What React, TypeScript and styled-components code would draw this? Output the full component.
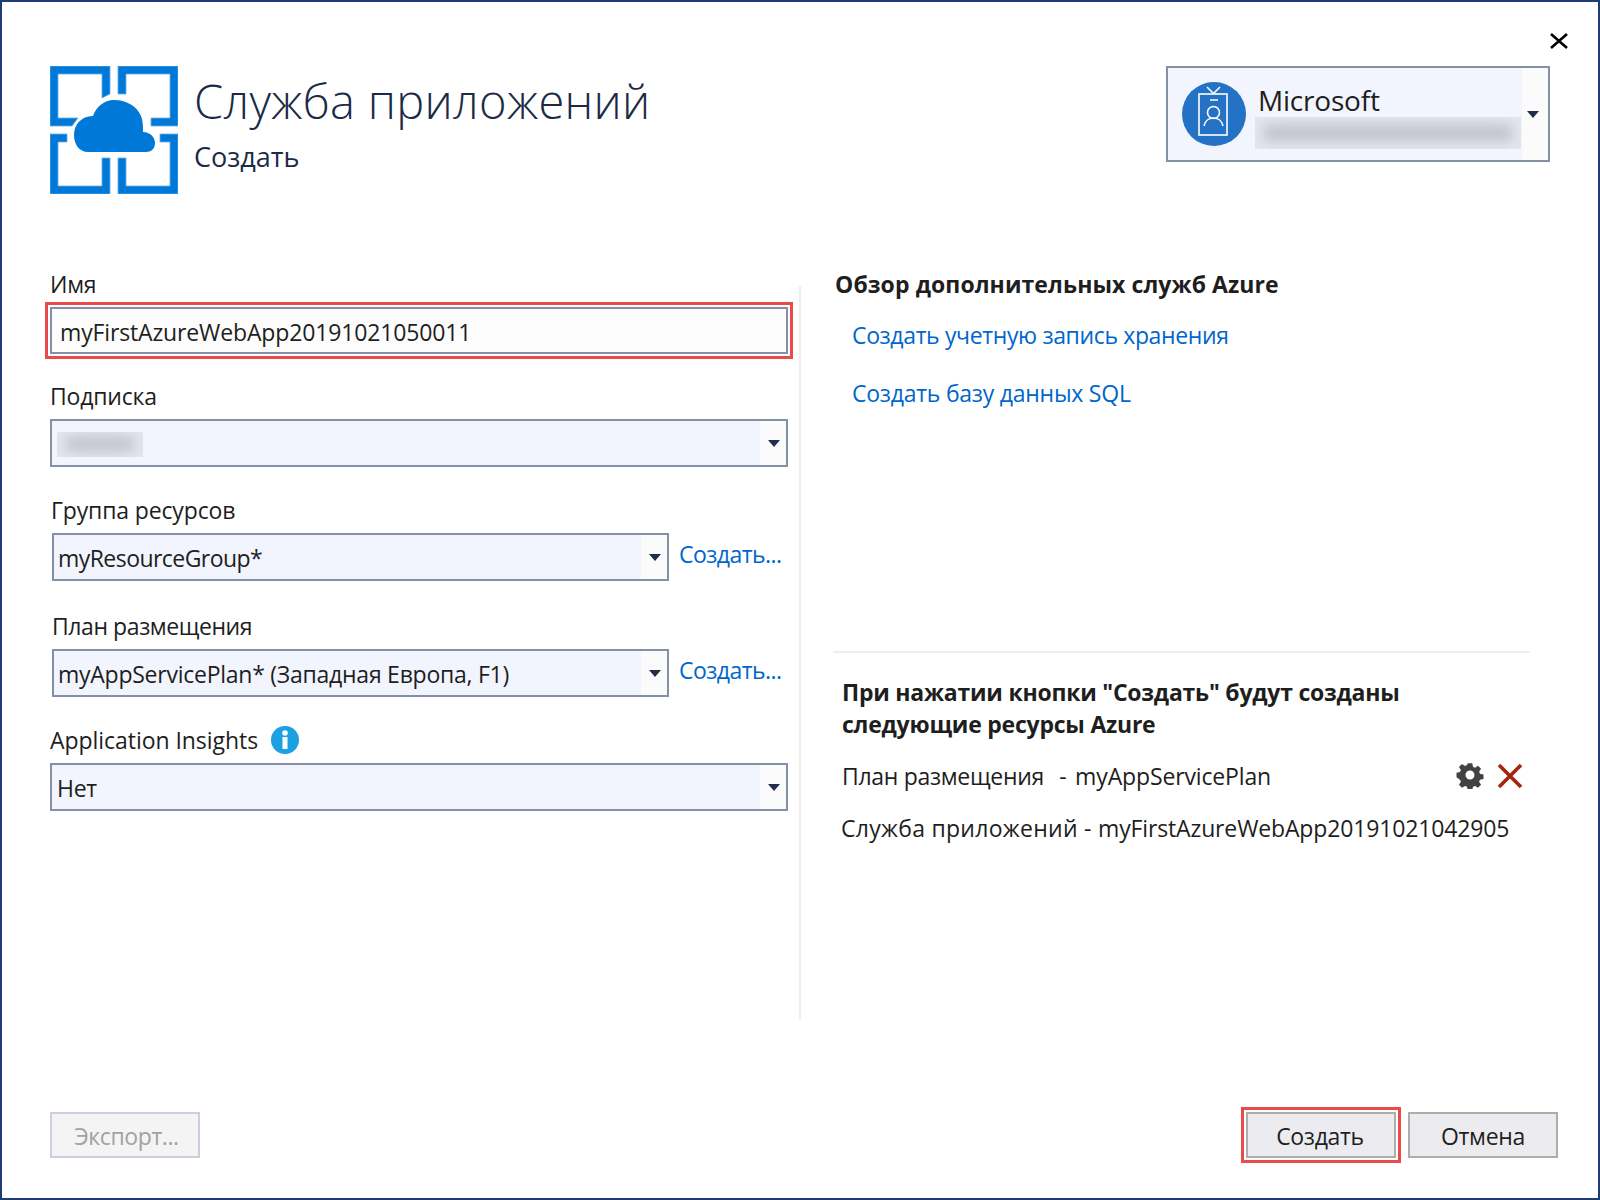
import React from "react";
import styled, { createGlobalStyle } from "styled-components";

const GlobalStyle = createGlobalStyle`
  html, body { margin: 0; padding: 0; background: #fff; }
  body { font-family: "Open Sans", "Noto Sans", "Liberation Sans", sans-serif; }
`;

const Window = styled.div`
  box-sizing: border-box;
  width: 1600px;
  height: 1200px;
  border: 2px solid #1f3b77;
  background: #fff;
  display: flex;
  flex-direction: column;
  color: #1e1e1e;
  font-size: 23px;
  letter-spacing: -0.3px;
`;

const CloseRow = styled.div`
  height: 64px;
  display: flex;
  justify-content: flex-end;
  align-items: flex-start;
  padding: 31px 29px 0 0;
  box-sizing: border-box;
`;

const Header = styled.header`
  display: flex;
  justify-content: space-between;
  align-items: flex-start;
  padding: 0 48px;
  height: 128px;
`;

const Brand = styled.div`
  display: flex;
  gap: 16px;
`;

const Titles = styled.div`
  display: flex;
  flex-direction: column;
  padding-top: 3px;
`;

const Title = styled.h1`
  margin: 0;
  font-size: 47px;
  font-weight: 300;
  line-height: 64px;
  color: #1b2a47;
  letter-spacing: 0.3px;
`;

const Subtitle = styled.div`
  font-size: 27px;
  line-height: 36px;
  margin-top: 6px;
  color: #1b2a47;
  letter-spacing: 0;
`;

const Account = styled.div`
  box-sizing: border-box;
  width: 384px;
  height: 96px;
  border: 2px solid #8590a8;
  background: #fbfbfc;
  display: flex;
  align-items: center;
`;

const AccountBody = styled.div`
  width: 354px;
  height: 92px;
  background: #f2f5fd;
  display: flex;
  align-items: center;
  padding-left: 14px;
  box-sizing: border-box;
`;

const AccountText = styled.div`
  display: flex;
  flex-direction: column;
  margin-left: 9px;
`;

const AccountName = styled.div`
  font-size: 28px;
  line-height: 38px;
  margin: 2px 0 -2px 3px;
  letter-spacing: -0.2px;
`;

const Redacted = styled.div<{ $w: number; $h: number }>`
  width: ${(p) => p.$w}px;
  height: ${(p) => p.$h}px;
  background: #e4e6ee;
  overflow: hidden;
  display: flex;
  align-items: center;
  justify-content: center;
`;

const Smudge = styled.div<{ $w: number; $h: number }>`
  width: ${(p) => p.$w}px;
  height: ${(p) => p.$h}px;
  background: #c4c6ce;
  border-radius: 6px;
  filter: blur(6px);
`;

const Main = styled.main`
  display: grid;
  grid-template-columns: 797px 2px 1fr;
  margin-top: 75px;
`;

const Rule = styled.div`
  margin-top: 17px;
  height: 734px;
  background: #eeeeee;
`;

const LeftColumn = styled.section`
  padding-left: 48px;
`;

const Label = styled.div<{ $top?: number; $left?: number; $track?: number }>`
  line-height: 30px;
  height: 30px;
  margin-top: ${(p) => p.$top ?? 0}px;
  margin-left: ${(p) => p.$left ?? 0}px;
  margin-bottom: 8px;
  letter-spacing: ${(p) => p.$track ?? -0.3}px;
  display: flex;
  align-items: center;
  gap: 13px;
`;

const TextBox = styled.div`
  box-sizing: border-box;
  width: 738px;
  height: 47px;
  border: 2px solid #8590a8;
  background: #fcfcfc;
  padding-left: 8px;
  line-height: 47px;
  letter-spacing: -0.14px;
  outline: 3px solid #e94c48;
  outline-offset: 2px;
`;

const Combo = styled.div<{ $wide?: boolean }>`
  box-sizing: border-box;
  width: ${(p) => (p.$wide ? 738 : 617)}px;
  height: 48px;
  border: 2px solid #8590a8;
  background: #fbfbfc;
  display: flex;
`;

const ComboValue = styled.div<{ $pad?: number; $track?: number }>`
  flex: 1;
  box-sizing: border-box;
  background: #f2f5fd;
  padding: 2px 0 0 ${(p) => p.$pad ?? 5}px;
  letter-spacing: ${(p) => p.$track ?? -0.3}px;
  display: flex;
  align-items: center;
  white-space: nowrap;
`;

const Caret = styled.div<{ $nudge?: number }>`
  width: 26px;
  display: flex;
  align-items: center;
  justify-content: center;
  &::after {
    content: "";
    border-left: 6px solid transparent;
    border-right: 6px solid transparent;
    border-top: 7px solid #1e2d4a;
    transform: translateX(${(p) => p.$nudge ?? 1}px);
  }
`;

const ComboRow = styled.div`
  display: flex;
  gap: 10px;
  margin-left: 2px;
  align-items: center;
`;

const Link = styled.a`
  color: #0066cc;
  text-decoration: none;
  white-space: nowrap;
  line-height: 30px;
  cursor: pointer;
`;

const CreateLink = styled(Link)`
  margin-top: -6px;
  letter-spacing: -0.55px;
`;

const RightColumn = styled.section`
  display: flex;
  flex-direction: column;
`;

const Heading = styled.div`
  font-weight: 700;
  line-height: 30px;
  margin-left: 34px;
  letter-spacing: 0.08px;
`;

const RightLink = styled(Link)<{ $top: number; $track: number }>`
  margin-left: 51px;
  margin-top: ${(p) => p.$top}px;
  letter-spacing: ${(p) => p.$track}px;
`;

const HRule = styled.div`
  height: 2px;
  background: #eeeeee;
  margin: 243px 68px 0 32px;
`;

const Summary = styled.div`
  margin: 23px 0 0 41px;
  font-weight: 700;
  line-height: 32px;
  width: 640px;
  letter-spacing: -0.23px;
`;

const ResourceRow = styled.div`
  display: flex;
  align-items: center;
  justify-content: space-between;
  margin: 21px 75px 0 41px;
  height: 30px;
  white-space: pre;
`;

const ResourceActions = styled.div`
  display: flex;
  align-items: center;
  gap: 13px;
  margin-top: -2px;
`;

const RemoveSlot = styled.span`
  display: flex;
  margin-top: 2px;
`;

const ResourceLine = styled.div`
  margin: 22px 0 0 40px;
  line-height: 30px;
  letter-spacing: 0.28px;
  white-space: pre;
`;

const Latin = styled.span`
  letter-spacing: -0.14px;
`;

const Dash = styled.span`
  margin: 0 3px 0 4px;
`;

const Footer = styled.footer`
  margin-top: auto;
  padding: 0 40px 40px 48px;
  display: flex;
  align-items: center;
`;

const Button = styled.button<{ $primary?: boolean }>`
  box-sizing: border-box;
  width: 150px;
  height: 46px;
  border: 2px solid #adadad;
  background: #ececf0;
  color: #1e1e1e;
  font: inherit;
  letter-spacing: inherit;
  padding: ${(p) => (p.$primary ? "2px 2px 0 0" : "2px 0 0")};
  outline: ${(p) => (p.$primary ? "3px solid #e94c48" : "none")};
  outline-offset: 2px;
`;

const DisabledButton = styled(Button)`
  border-color: #ccd0de;
  background: #f4f4f4;
  color: #a2a2a2;
  padding-left: 3px;
  letter-spacing: -0.4px;
`;

const FooterActions = styled.div`
  margin-left: auto;
  display: flex;
  gap: 12px;
`;

const AzureLogo = () => (
  <svg width="128" height="128" viewBox="0 0 128 128" fill="#0078d7">
    <g stroke="#66aee8" strokeWidth="0.8">
      <polygon points="0,0 60,0 60,28 52,32 52,8 8,8 8,52 28,52 22,60 0,60" />
      <polygon points="68,0 128,0 128,60 101,60 101,52 120,52 120,8 76,8 76,28 68,28" />
      <polygon points="0,68 17,68 17,76 8,76 8,120 52,120 52,92 60,92 60,128 0,128" />
      <polygon points="110,68 128,68 128,128 68,128 68,92 76,92 76,120 120,120 120,76 110,76" />
    </g>
    <path d="M38 86C29 86 24 78 24 69C24 59 31 50 43 50C46 41 54 34 64 34C76 34 87 40 91 50C93 55 93 60 93 66C100 66 105 71 105 77C105 83 101 86 96 86Z" />
  </svg>
);

const BadgeAvatar = () => (
  <svg width="64" height="64" viewBox="0 0 64 64" fill="none" stroke="#fff" strokeWidth="1.6">
    <circle cx="32" cy="32" r="32" fill="#2372c6" stroke="none" />
    <rect x="17" y="12" width="28" height="41" />
    <path d="M25 5l7 7M38 5l-7 7M28 18h8" />
    <circle cx="31.5" cy="30.5" r="6" />
    <path d="M22 44c1-5 5-8 9.500-8s8.500 3 9.500 8" />
  </svg>
);

const CloseIcon = () => (
  <svg width="20" height="16" viewBox="0 0 20 16" stroke="#000" strokeWidth="2.600">
    <path d="M2 1l16 14M18 1L2 15" />
  </svg>
);

const InfoIcon = () => (
  <svg width="28" height="28" viewBox="0 0 28 28">
    <circle cx="14" cy="14" r="14" fill="#1ba1e2" />
    <rect x="11.500" y="11" width="5" height="12" fill="#fff" />
    <circle cx="14" cy="7" r="2.800" fill="#fff" />
  </svg>
);

const GearIcon = () => (
  <svg width="28" height="28" viewBox="0 0 28 28" fill="#424242">
    <path
      fillRule="evenodd"
      d="M11.500 1h5l.8 3.900 2.300 1 3.300-2.200 3.400 3.400-2.200 3.300 1 2.300 3.900.8v5l-3.900.8-1 2.300 2.200 3.300-3.400 3.400-3.300-2.200-2.300 1-.8 3.900h-5l-.8-3.900-2.300-1-3.300 2.200-3.400-3.400 2.200-3.300-1-2.300L-1 16.500v-5l3.900-.8 1-2.300-2.200-3.300 3.400-3.400 3.300 2.200 2.300-1zM14 9a5 5 0 1 0 0 10 5 5 0 0 0 0-10z"
      transform="translate(1.400 1.400) scale(.9)"
    />
  </svg>
);

const RemoveIcon = () => (
  <svg width="26" height="26" viewBox="0 0 26 26" stroke="#a1260d" strokeWidth="3.600">
    <path d="M2 2l22 22M24 2L2 24" />
  </svg>
);

const App = () => (
  <Window>
    <GlobalStyle />
    <CloseRow>
      <CloseIcon />
    </CloseRow>
    <Header>
      <Brand>
        <AzureLogo />
        <Titles>
          <Title>Служба приложений</Title>
          <Subtitle>Создать</Subtitle>
        </Titles>
      </Brand>
      <Account>
        <AccountBody>
          <BadgeAvatar />
          <AccountText>
            <AccountName>Microsoft</AccountName>
            <Redacted $w={266} $h={32}>
              <Smudge $w={250} $h={18} />
            </Redacted>
          </AccountText>
        </AccountBody>
        <Caret $nudge={-2} />
      </Account>
    </Header>
    <Main>
      <LeftColumn>
        <Label>Имя</Label>
        <TextBox>myFirstAzureWebApp20191021050011</TextBox>
        <Label $top={27} $track={-0.18}>Подписка</Label>
        <Combo $wide>
          <ComboValue>
            <Redacted $w={86} $h={25}>
              <Smudge $w={70} $h={16} />
            </Redacted>
          </ComboValue>
          <Caret />
        </Combo>
        <Label $top={28} $left={1} $track={-0.15}>Группа ресурсов</Label>
        <ComboRow>
          <Combo>
            <ComboValue $pad={4} $track={-0.55}>myResourceGroup*</ComboValue>
            <Caret />
          </Combo>
          <CreateLink>Создать...</CreateLink>
        </ComboRow>
        <Label $top={30} $left={2} $track={-0.42}>План размещения</Label>
        <ComboRow>
          <Combo>
            <ComboValue $pad={4} $track={-0.25}>myAppServicePlan* (Западная Европа, F1)</ComboValue>
            <Caret />
          </Combo>
          <CreateLink>Создать...</CreateLink>
        </ComboRow>
        <Label $top={28} $track={-0.05}>
          Application Insights
          <InfoIcon />
        </Label>
        <Combo $wide>
          <ComboValue>Нет</ComboValue>
          <Caret />
        </Combo>
      </LeftColumn>
      <Rule />
      <RightColumn>
        <Heading>Обзор дополнительных служб Azure</Heading>
        <RightLink $top={21} $track={-0.36}>Создать учетную запись хранения</RightLink>
        <RightLink $top={28} $track={-0.24}>Создать базу данных SQL</RightLink>
        <HRule />
        <Summary>При нажатии кнопки "Создать" будут созданы следующие ресурсы Azure</Summary>
        <ResourceRow>
          <span>
            План размещения{"  "}<Dash>-</Dash>{" "}<Latin>myAppServicePlan</Latin>
          </span>
          <ResourceActions>
            <GearIcon />
            <RemoveSlot>
              <RemoveIcon />
            </RemoveSlot>
          </ResourceActions>
        </ResourceRow>
        <ResourceLine>
          Служба приложений - <Latin>myFirstAzureWebApp20191021042905</Latin>
        </ResourceLine>
      </RightColumn>
    </Main>
    <Footer>
      <DisabledButton disabled>Экспорт...</DisabledButton>
      <FooterActions>
        <Button $primary>Создать</Button>
        <Button>Отмена</Button>
      </FooterActions>
    </Footer>
  </Window>
);

export default App;
